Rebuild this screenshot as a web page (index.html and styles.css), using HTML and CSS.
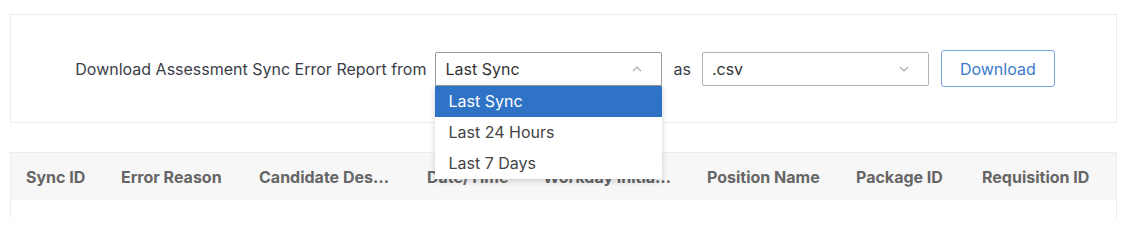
FILE: index.html
```html
<!DOCTYPE html>
<html>
<head>
  <meta charset="UTF-8">
  <title>Assessment Sync Errors</title>
  <link rel="stylesheet" href="styles.css">
</head>
<body>
  <div class="page">
    <!-- Export bar -->
    <div class="export-panel">
      <div class="export-row">
        <span class="export-label">Download Assessment Sync Error Report from</span>
        <div class="select-wrap first">
          <div class="select open">
            <span>Last Sync</span>
            <svg class="chevron" width="10" height="6" viewBox="0 0 10 6"><path d="M1 5 L5 1 L9 5" fill="none" stroke="#aaa" stroke-width="1.2"/></svg>
          </div>
          <ul class="menu">
            <li class="active">Last Sync</li>
            <li>Last 24 Hours</li>
            <li>Last 7 Days</li>
          </ul>
        </div>
        <span class="export-label">as</span>
        <div class="select-wrap">
          <div class="select">
            <span>.csv</span>
            <svg class="chevron" width="10" height="6" viewBox="0 0 10 6"><path d="M1 1 L5 5 L9 1" fill="none" stroke="#aaa" stroke-width="1.2"/></svg>
          </div>
        </div>
        <button class="btn-download">Download</button>
      </div>
    </div>

    <!-- Error table -->
    <div class="grid">
      <div class="grid-head">
        <div class="cell c-sync">Sync ID</div>
        <div class="cell c-reason">Error Reason</div>
        <div class="cell c-cand">Candidate Description</div>
        <div class="cell c-date">Date/Time</div>
        <div class="cell c-wd">Workday Initiated</div>
        <div class="cell c-pos">Position Name</div>
        <div class="cell c-pkg">Package ID</div>
        <div class="cell c-req">Requisition ID</div>
      </div>
      <div class="grid-body"></div>
    </div>
  </div>
</body>
</html>
```

FILE: styles.css
```css
body {
  margin: 0;
  background: #fff;
  font-family: Inter, "Noto Sans", sans-serif;
  font-size: 16px;
  color: #3a3e48;
}
.page {
  padding: 14px 11px 0 10px;
}
/* Top panel with the export controls */
.export-panel {
  border: 1px solid #ececec;
  height: 107px;
  display: flex;
  align-items: center;
  justify-content: center;
}
.export-row {
  display: flex;
  align-items: center;
  gap: 11px;
  margin-left: 3px;
}
.export-label {
  white-space: nowrap;
}
.select-wrap {
  position: relative;
}
.select-wrap.first {
  margin-left: -2px;
}
.select {
  box-sizing: border-box;
  width: 227px;
  height: 34px;
  border: 1px solid #b4b4b4;
  border-radius: 2px;
  padding: 0 19px 0 9px;
  display: flex;
  align-items: center;
  justify-content: space-between;
  color: #333;
  background: #fff;
}
.select.open {
  border-color: #9a9a9a;
  border-radius: 2px 2px 0 0;
}
.menu {
  position: absolute;
  left: 0;
  top: 34px;
  width: 227px;
  margin: 0;
  padding: 0;
  list-style: none;
  background: #fff;
  box-shadow: 0 2px 6px rgba(0,0,0,0.18);
  z-index: 5;
}
.menu li {
  height: 31px;
  line-height: 31px;
  padding-left: 13px;
  color: #444;
}
.menu li.active {
  background: #2f73c6;
  color: #fff;
}
.btn-download {
  margin-left: 1px;
  height: 37px;
  padding: 0 18px;
  font-family: inherit;
  font-size: 16px;
  color: #3b79cc;
  background: #fff;
  border: 1px solid #7aa6e0;
  border-radius: 3px;
}
/* Table */
.grid {
  margin-top: 29px;
  border: 1px solid #ececec;
  border-bottom: none;
}
.grid-head {
  display: flex;
  height: 47px;
  align-items: center;
  background: #f7f7f7;
  font-weight: 700;
  color: #666;
}
.cell {
  box-sizing: border-box;
  padding: 1px 4px 0 15px;
  white-space: nowrap;
  overflow: hidden;
  text-overflow: ellipsis;
}
.c-sync { width: 95px; }
.c-reason { width: 138px; }
.c-cand { width: 168px; padding-right: 20px; }
.c-date { width: 116px; }
.c-wd { width: 164px; padding-right: 20px; }
.c-pos { width: 149px; }
.c-pkg { width: 126px; }
.c-req { flex: 1; }
.grid-body {
  height: 18px;
  background: #fff;
}
```
